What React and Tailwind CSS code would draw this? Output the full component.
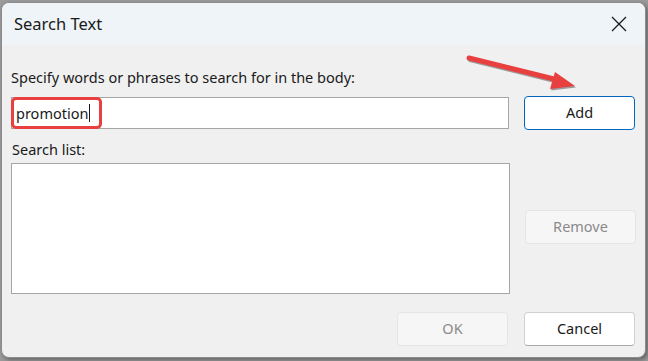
export default function App() {
  const font = { fontFamily: '"Noto Sans", "Open Sans", sans-serif' };

  return (
    <div className="w-[648px] h-[361px] bg-[#9a9a9a] relative overflow-hidden" style={font}>
      {/* Dialog */}
      <div className="absolute left-[1px] top-[2px] w-[645px] h-[356px] rounded-[8px] border border-[#8c8c8c] bg-[#f0f0f0] overflow-hidden flex flex-col shadow-[2px_2px_4px_rgba(0,0,0,0.35)]">
        {/* Title bar */}
        <div className="h-[42px] bg-[#eef4f8] flex items-center justify-between pl-[12px] pr-[16px] shrink-0">
          <span className="text-[16.5px] text-[#1a1a1a]">Search Text</span>
          <svg width="16" height="16" viewBox="0 0 16 16" className="mr-[2px]">
            <path d="M1 1 L15 15 M15 1 L1 15" stroke="#1a1a1a" strokeWidth="1.3" />
          </svg>
        </div>

        {/* Body */}
        <div className="flex-1 pl-[9px] pr-[10px] pt-[22px] text-[14.5px] text-[#1a1a1a]">
          <div className="leading-[20px]">Specify words or phrases to search for in the body:</div>

          <div className="flex items-center gap-[15px] mt-[9px]">
            <div className="relative w-[499px] h-[32px] bg-white border border-[#a6a6a6] flex items-center pl-[4px]">
              <span className="leading-none">promotion</span>
              <span className="w-[1px] h-[18px] bg-[#1a1a1a] ml-[1px]" />
              <div className="absolute left-[-1px] top-[-1px] w-[91px] h-[32px] rounded-[5px] border-[3px] border-[#e8403f]" />
            </div>
            <button className="w-[111px] h-[34px] bg-white border border-[#0067c0] rounded-[4px] text-[14.5px] text-[#1a1a1a]">
              Add
            </button>
          </div>

          <div className="flex gap-[15px] mt-[9px]">
            <div className="flex flex-col">
              <div className="leading-[20px] pl-[1px]">Search list:</div>
              <div className="w-[499px] h-[131px] bg-white border border-[#a6a6a6] mt-[4px]" />
            </div>
            <div className="pt-[71px]">
              <button className="w-[111px] h-[34px] bg-[#f6f6f6] border border-[#e5e5e5] rounded-[4px] text-[14.5px] text-[#8a8a8a]">
                Remove
              </button>
            </div>
          </div>

          <div className="flex justify-end gap-[16px] mt-[18px]">
            <button className="w-[111px] h-[34px] bg-[#f6f6f6] border border-[#e5e5e5] rounded-[4px] text-[14.5px] text-[#8a8a8a]">
              OK
            </button>
            <button className="w-[111px] h-[34px] bg-white border border-[#d0d0d0] border-b-[#a8a8a8] rounded-[4px] text-[14.5px] text-[#1a1a1a]">
              Cancel
            </button>
          </div>
        </div>
      </div>

      {/* Red annotation arrow */}
      <svg className="absolute left-0 top-0 pointer-events-none" width="648" height="361">
        <g transform="translate(1,1.5)" opacity="0.35">
          <line x1="469" y1="58" x2="558" y2="80" stroke="#000" strokeWidth="5" strokeLinecap="round" />
          <polygon points="555,72 575,86 550,89" fill="#000" />
        </g>
        <line x1="469" y1="58" x2="558" y2="80" stroke="#e8403f" strokeWidth="5" strokeLinecap="round" />
        <polygon points="555,72 575,86 550,89" fill="#e8403f" />
      </svg>
    </div>
  );
}
